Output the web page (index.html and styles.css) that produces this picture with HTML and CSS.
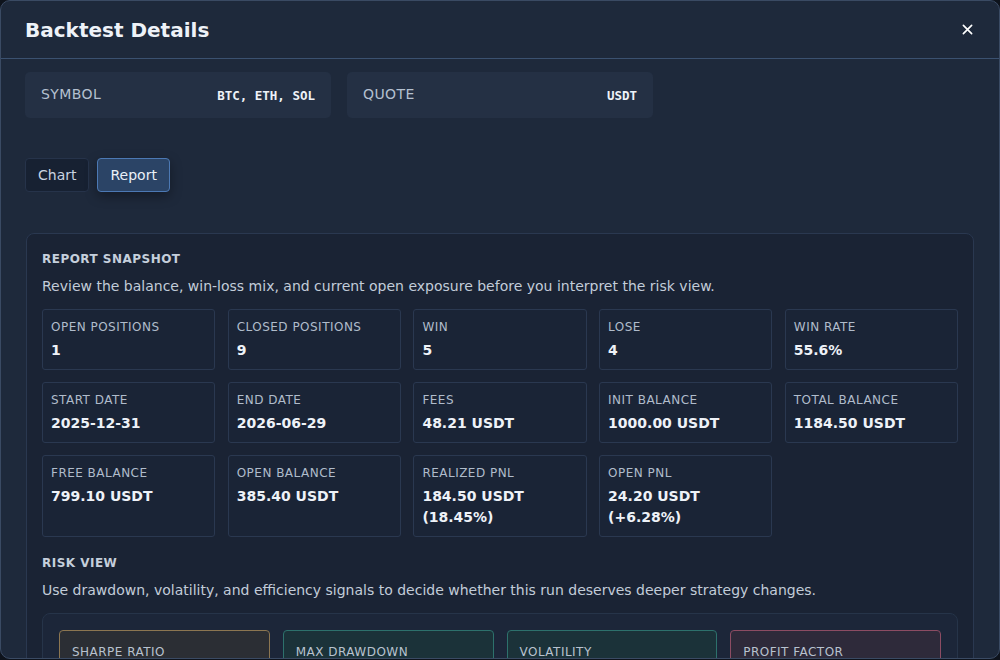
FILE: index.html
```html
<!DOCTYPE html>
<html>
<head>
    <title>Backtest Details</title>
    <link rel="stylesheet" href="styles.css">
</head>
<body>
    <div class="modal">
        <div class="modal-header">
            <h2>Backtest Details</h2>
            <button class="close-btn" aria-label="Close">
                <svg viewBox="0 0 12 12" width="11" height="11">
                    <path d="M1.5 1.5 L10.5 10.5 M10.5 1.5 L1.5 10.5" stroke="#ffffff" stroke-width="1.8" stroke-linecap="round"/>
                </svg>
            </button>
        </div>

        <div class="modal-body">
            <div class="meta-row">
                <div class="meta-card">
                    <span class="meta-label">SYMBOL</span>
                    <span class="meta-value">BTC, ETH, SOL</span>
                </div>
                <div class="meta-card">
                    <span class="meta-label">QUOTE</span>
                    <span class="meta-value">USDT</span>
                </div>
            </div>

            <div class="tabs">
                <button class="tab">Chart</button>
                <button class="tab active">Report</button>
            </div>

            <div class="report">
                <h3 class="section-title">REPORT SNAPSHOT</h3>
                <p class="section-desc">Review the balance, win-loss mix, and current open exposure before you interpret the risk view.</p>

                <div class="stat-grid">
                    <div class="stat"><div class="stat-label">OPEN POSITIONS</div><div class="stat-value">1</div></div>
                    <div class="stat"><div class="stat-label">CLOSED POSITIONS</div><div class="stat-value">9</div></div>
                    <div class="stat"><div class="stat-label">WIN</div><div class="stat-value">5</div></div>
                    <div class="stat"><div class="stat-label">LOSE</div><div class="stat-value">4</div></div>
                    <div class="stat"><div class="stat-label">WIN RATE</div><div class="stat-value">55.6%</div></div>

                    <div class="stat"><div class="stat-label">START DATE</div><div class="stat-value">2025-12-31</div></div>
                    <div class="stat"><div class="stat-label">END DATE</div><div class="stat-value">2026-06-29</div></div>
                    <div class="stat"><div class="stat-label">FEES</div><div class="stat-value">48.21 USDT</div></div>
                    <div class="stat"><div class="stat-label">INIT BALANCE</div><div class="stat-value">1000.00 USDT</div></div>
                    <div class="stat"><div class="stat-label">TOTAL BALANCE</div><div class="stat-value">1184.50 USDT</div></div>

                    <div class="stat"><div class="stat-label">FREE BALANCE</div><div class="stat-value">799.10 USDT</div></div>
                    <div class="stat"><div class="stat-label">OPEN BALANCE</div><div class="stat-value">385.40 USDT</div></div>
                    <div class="stat"><div class="stat-label">REALIZED PNL</div><div class="stat-value">184.50 USDT<br>(18.45%)</div></div>
                    <div class="stat"><div class="stat-label">OPEN PNL</div><div class="stat-value">24.20 USDT<br>(+6.28%)</div></div>
                </div>

                <h3 class="section-title">RISK VIEW</h3>
                <p class="section-desc">Use drawdown, volatility, and efficiency signals to decide whether this run deserves deeper strategy changes.</p>

                <div class="risk-panel">
                    <div class="risk-grid">
                        <div class="risk-card gold"><div class="risk-label">SHARPE RATIO</div><div class="risk-value">1.42</div></div>
                        <div class="risk-card teal"><div class="risk-label">MAX DRAWDOWN</div><div class="risk-value">-8.35%</div></div>
                        <div class="risk-card teal"><div class="risk-label">VOLATILITY</div><div class="risk-value">2.14%</div></div>
                        <div class="risk-card rose"><div class="risk-label">PROFIT FACTOR</div><div class="risk-value">1.87</div></div>
                    </div>
                </div>
            </div>
        </div>
    </div>
</body>
</html>
```

FILE: styles.css
```css
* {
    box-sizing: border-box;
}
body {
    margin: 0;
    background-color: #0e131c;
    font-family: 'DejaVu Sans', Verdana, sans-serif;
    color: #e6ecf4;
}
.modal {
    width: 1000px;
    height: 659px;
    background-color: #1e293b;
    border: 1px solid #3a4a63;
    border-radius: 10px;
    overflow: hidden;
    display: flex;
    flex-direction: column;
}
.modal-header {
    display: flex;
    align-items: center;
    justify-content: space-between;
    height: 58px;
    padding: 0 24px;
    border-bottom: 1px solid #3b5170;
    flex-shrink: 0;
}
.modal-header h2 {
    margin: 0;
    font-size: 20px;
    font-weight: bold;
    color: #eef2f8;
}
.close-btn {
    background: none;
    border: none;
    padding: 0;
    width: 16px;
    height: 16px;
    display: flex;
    align-items: center;
    justify-content: center;
    cursor: pointer;
}
.modal-body {
    flex: 1;
    overflow: hidden;
    padding: 13px 25px 0 24px;
}

/* Symbol / quote */
.meta-row {
    display: grid;
    grid-template-columns: 306px 306px;
    gap: 16px;
}
.meta-card {
    display: flex;
    align-items: center;
    justify-content: space-between;
    height: 46px;
    padding: 0 16px;
    background-color: #243044;
    border-radius: 5px;
}
.meta-label {
    font-size: 14px;
    letter-spacing: 0.03em;
    color: #b4c0d0;
    margin-top: -3px;
}
.meta-value {
    font-family: 'DejaVu Sans Mono', monospace;
    font-weight: bold;
    font-size: 12.5px;
    color: #eef2f8;
}

/* Tabs */
.tabs {
    display: flex;
    gap: 8px;
    margin-top: 40px;
}
.tab {
    height: 34px;
    padding: 0 12px;
    font-family: 'DejaVu Sans', Verdana, sans-serif;
    font-size: 14px;
    color: #c9d3e0;
    background-color: #172132;
    border: 1px solid #26334a;
    border-radius: 4px;
    cursor: pointer;
}
.tab.active {
    background-color: #2b4466;
    border-color: #4c79b4;
    color: #eaf0f8;
    box-shadow: 0 4px 12px rgba(0, 0, 0, 0.35);
}

/* Report */
.report {
    margin-top: 41px;
    margin-left: 1px;
    background-color: #1a2334;
    border: 1px solid #2a3850;
    border-radius: 8px;
    padding: 16px 15px 20px;
}
.section-title {
    margin: 0;
    font-size: 12px;
    line-height: 18px;
    font-weight: bold;
    letter-spacing: 0.04em;
    color: #c5cfdc;
}
.section-desc {
    margin: 8px 0 13px;
    font-size: 14px;
    line-height: 20px;
    color: #c2ccd9;
}
.stat-grid {
    display: grid;
    grid-template-columns: repeat(5, 1fr);
    gap: 12px 12.5px;
    margin-bottom: 17px;
}
.stat {
    padding: 8px 8px 8px;
    background-color: #1a2436;
    border: 1px solid #2a3850;
    border-radius: 3px;
}
.stat-label {
    font-size: 12px;
    line-height: 18px;
    letter-spacing: 0.04em;
    color: #b0bccb;
}
.stat-value {
    margin-top: 4px;
    font-size: 14px;
    line-height: 21px;
    font-weight: bold;
    color: #eef2f8;
}

/* Risk view */
.risk-panel {
    background-color: #1c2639;
    border: 1px solid #263449;
    border-radius: 8px;
    padding: 16px;
}
.risk-grid {
    display: grid;
    grid-template-columns: repeat(4, 1fr);
    gap: 13px;
}
.risk-card {
    padding: 12px 12px 14px;
    border: 1px solid;
    border-radius: 4px;
}
.risk-card.gold {
    background-color: #2b2e34;
    border-color: #8c7651;
}
.risk-card.teal {
    background-color: #1b3239;
    border-color: #2d716c;
}
.risk-card.rose {
    background-color: #2e2a3a;
    border-color: #8c4c63;
}
.risk-label {
    font-size: 12px;
    line-height: 18px;
    letter-spacing: 0.04em;
    color: #b8c2cf;
}
.risk-value {
    margin-top: 6px;
    font-size: 18px;
    font-weight: bold;
    color: #eef2f8;
}
```
